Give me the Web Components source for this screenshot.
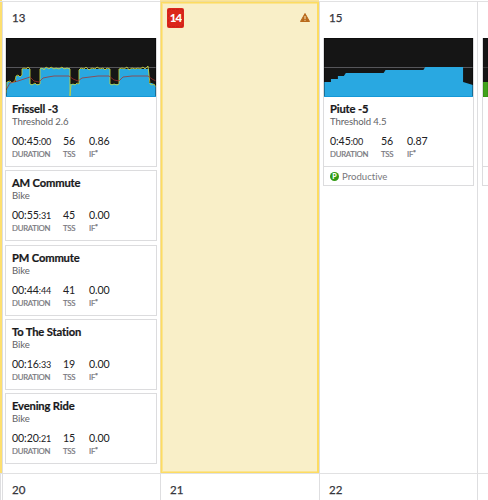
<!DOCTYPE html>
<html lang="en">
<head>
<meta charset="utf-8">
<title>Training Calendar</title>
<style>
    body {
        margin: 0;
        width: 488px;
        height: 500px;
        overflow: hidden;
        background: #fff;
        font-family: Lato, "Liberation Sans", sans-serif;
        font-variant-ligatures: none;
        color: #202023;
    }
</style>
</head>
<body>
<training-calendar>
    <calendar-day class="previous"></calendar-day>
    <calendar-day date="13">
        <workout-card name="Frissell -3" detail="Threshold 2.6" hours="00:45" seconds=":00" tss="56" factor="0.86">
            <power-chart slot="chart" kind="ridden"></power-chart>
        </workout-card>
        <workout-card name="AM Commute" detail="Bike" hours="00:55" seconds=":31" tss="45" factor="0.00"></workout-card>
        <workout-card name="PM Commute" detail="Bike" hours="00:44" seconds=":44" tss="41" factor="0.00"></workout-card>
        <workout-card name="To The Station" detail="Bike" hours="00:16" seconds=":33" tss="19" factor="0.00"></workout-card>
        <workout-card name="Evening Ride" detail="Bike" hours="00:20" seconds=":21" tss="15" factor="0.00"></workout-card>
    </calendar-day>
    <calendar-day date="14" class="today"></calendar-day>
    <calendar-day date="15" class="upcoming">
        <workout-card name="Piute -5" detail="Threshold 4.5" hours="0:45" seconds=":00" tss="56" factor="0.87" level="Productive">
            <power-chart slot="chart" kind="planned"></power-chart>
        </workout-card>
    </calendar-day>
    <calendar-day class="upcoming last">
        <workout-card class="clipped" level=" ">
            <power-chart slot="chart" kind="endurance"></power-chart>
        </workout-card>
    </calendar-day>
    <calendar-day></calendar-day>
    <calendar-day date="20"></calendar-day>
    <calendar-day date="21"></calendar-day>
    <calendar-day date="22"></calendar-day>
    <calendar-day></calendar-day>
</training-calendar>

<script>
class TrainingCalendar extends HTMLElement {
    constructor() {
        super();
        this.attachShadow({ mode: 'open' });
        this.shadowRoot.innerHTML = `
            <style>
                :host {
                    display: grid;
                    grid-template-columns: 2px 158px 159px 158px 11px;
                    grid-template-rows: 472px 27px;
                    padding-top: 1px;
                    background: linear-gradient(90deg, #fce07a 2px, #fff 2px 160px, #fbe49a 160px 319px, #fff 319px) 0 0 / 100% 1px no-repeat;
                }
            </style>
            <slot></slot>
        `;
    }
}

class CalendarDay extends HTMLElement {
    constructor() {
        super();
        this.attachShadow({ mode: 'open' });
    }

    connectedCallback() {
        const date = this.getAttribute('date') || '';
        this.shadowRoot.innerHTML = `
            <style>
                :host {
                    display: block;
                    box-sizing: border-box;
                    min-width: 0;
                    overflow: hidden;
                    border-top: 1px solid #e1e1e2;
                    border-left: 1px solid #dedee0;
                }

                :host(.previous) {
                    background: #fddf70;
                    border-left: 0;
                }

                :host(.today) {
                    border-left-color: #f3dfa0;
                    border-top-color: #f0dc98;
                    background: #f9efc8;
                    box-shadow: inset 0 0 0 1px #fddc62, inset -2px 0 0 0 #fddc62, inset 0 0 0 2px #fbe491;
                }

                header {
                    display: flex;
                    justify-content: space-between;
                    box-sizing: border-box;
                    height: 36px;
                    padding: 9px 9px 0 9px;
                    font-size: 11.5px;
                    line-height: 14px;
                    -webkit-text-stroke: 0.25px #36363c;
                    color: #36363c;
                }

                :host(.today) header {
                    padding: 6px 9px 0 6px;
                }

                :host(.today) .date {
                    box-sizing: border-box;
                    width: 17px;
                    height: 20px;
                    border-radius: 2px;
                    background: #dc261b;
                    outline: 1px dashed #c9231a;
                    outline-offset: -2px;
                    color: #fff;
                    font-weight: 900;
                    -webkit-text-stroke: 0;
                    letter-spacing: -0.8px;
                    line-height: 20px;
                    text-align: center;
                }

                svg {
                    margin-top: 5px;
                }

                .workouts {
                    display: flex;
                    flex-direction: column;
                    gap: 3.3px;
                    padding: 0 3px 0 2px;
                }

                :host(.upcoming) .workouts {
                    padding: 0 3px;
                }

                :host(.last) .workouts {
                    padding: 0 0 0 4px;
                }
            </style>
            <header>
                <span class="date">${date}</span>
                ${this.classList.contains('today') ? `
                <svg width="10" height="9" viewBox="0 0 10 9">
                    <path d="M5 .5 9.5 8.5H.5Z" fill="#b96a1c" stroke="#b96a1c" stroke-linejoin="round"/>
                    <path d="M5 3v3M5 6.8v1" stroke="#f8e9bd"/>
                </svg>` : ''}
            </header>
            <div class="workouts"><slot></slot></div>
        `;
    }
}

class WorkoutCard extends HTMLElement {
    constructor() {
        super();
        this.attachShadow({ mode: 'open' });
    }

    connectedCallback() {
        const value = name => this.getAttribute(name) || '';
        const stats = value('tss') ? `
            <dl>
                <div><dt>${value('hours')}<small>${value('seconds')}</small></dt><dd>DURATION</dd></div>
                <div><dt>${value('tss')}</dt><dd>TSS</dd></div>
                <div><dt>${value('factor')}</dt><dd>IF<sup>*</sup></dd></div>
            </dl>` : '';
        const level = this.hasAttribute('level') ? `
            <footer>${value('level').trim() ? `<i>P</i><span>${value('level')}</span>` : ''}</footer>` : '';

        this.shadowRoot.innerHTML = `
            <style>
                :host {
                    display: block;
                    box-sizing: border-box;
                    border: 1px solid #dcdcde;
                    background: #fff;
                }

                :host(.clipped) {
                    border-right: 0;
                }

                .body {
                    box-sizing: border-box;
                    height: 69px;
                    padding: 5px 0 0 6px;
                    white-space: nowrap;
                }

                h3 {
                    margin: 0;
                    font-size: 11.2px;
                    line-height: 13px;
                    font-weight: 700;
                    letter-spacing: -0.15px;
                    -webkit-text-stroke: 0.2px #18181a;
                    color: #18181a;
                }

                p {
                    margin: 0;
                    font-size: 9.6px;
                    line-height: 13px;
                    letter-spacing: -0.1px;
                    color: #626266;
                }

                dl {
                    display: grid;
                    grid-template-columns: 51px 26px auto;
                    margin: 6px 0 0;
                }

                dt {
                    height: 14px;
                    font-size: 10.6px;
                    line-height: 14px;
                    letter-spacing: -0.1px;
                }

                small {
                    font-size: 9px;
                    line-height: 0;
                }

                dd {
                    height: 10px;
                    margin: 1px 0 0;
                    font-size: 7.8px;
                    line-height: 10px;
                    letter-spacing: -0.25px;
                    -webkit-text-stroke: 0.2px #78787d;
                    color: #78787d;
                }

                sup {
                    font-size: 7px;
                    line-height: 0;
                    vertical-align: 1px;
                }

                footer {
                    display: flex;
                    align-items: center;
                    gap: 3px;
                    box-sizing: border-box;
                    height: 19px;
                    padding-left: 6px;
                    border-top: 1px solid #dcdcde;
                    font-size: 9.6px;
                    color: #78787c;
                }

                i {
                    width: 9px;
                    height: 9px;
                    border-radius: 50%;
                    background: #339b14;
                    color: #fff;
                    font: 900 7px/9px Lato, sans-serif;
                    text-align: center;
                }
            </style>
            <slot name="chart"></slot>
            <div class="body">
                ${value('name') ? `<h3>${value('name')}</h3><p>${value('detail')}</p>` : ''}
                ${stats}
            </div>
            ${level}
        `;
    }
}

// Each chart is 150x59, the threshold line sits at y = 29
const charts = {
    ridden: `
        <path d="M0 59V44H10V38H16V31H24V46H34V30H64V46H73V31H104V46H113V31H143V45H146L150 48V59Z" fill="#29a8e1"/>
        <path d="M0 55 1 44 4 43 6 45 9 43 10 38 12 37 14 39 16 37V31L18 30 20 31 22 29 24 31V46L26 47 29 45 31 47 34 46V31L36 30 38 32 40 29 43 31 45 29 48 31 50 30 53 31 56 29 58 31 61 30 64 31V58L65 47 67 46 69 47 71 45 73 46V32L75 30 78 31 80 29 83 32 86 30 89 31 91 29 94 31 97 30 99 32 101 30 104 31V46L106 47 108 46 111 47 113 46V31L116 30 118 31 121 29 123 32 126 30 129 31 132 30 134 31 137 29 139 31 142 28 144 46 146 47 148 46 150 49" fill="none" stroke="#c5d13c" stroke-width="1" opacity=".85"/>
        <path d="M0 52 4 45 12 43 18 41 24 39 28 43 33 44 37 40 42 39 48 38H63L67 41 72 43 76 40 84 39 92 38H103L108 42 113 43 117 39 126 38H142L146 41 150 43" fill="none" stroke="#a8302b" opacity=".75"/>`,
    planned: `
        <path d="M0 59V44H7V41H14V38H20L22 35H60L62 32H100L102 29H140V44L150 47V59Z" fill="#29a8e1"/>`,
    endurance: `
        <path d="M0 59V44H150V59Z" fill="#41a31b"/>`
};

class PowerChart extends HTMLElement {
    constructor() {
        super();
        this.attachShadow({ mode: 'open' });
    }

    connectedCallback() {
        const kind = this.getAttribute('kind');
        this.shadowRoot.innerHTML = `
            <style>
                :host {
                    display: block;
                    height: 59px;
                    overflow: hidden;
                    margin-top: -1px;
                    background: #151515;
                }

                svg {
                    display: block;
                }
            </style>
            <svg width="100%" height="59" viewBox="0 0 150 59" preserveAspectRatio="none">
                <path d="M0 29.5H150" stroke="#56565a"/>
                ${charts[kind]}
                <path d="M0 .5H150M.5 0V59M149.5 0V59" stroke="#000" fill="none" opacity=".35"/>
                <path d="M0 58.5H150" stroke="${kind === 'endurance' ? '#35910f' : '#1598d7'}"/>
            </svg>
        `;
    }
}

customElements.define('training-calendar', TrainingCalendar);
customElements.define('calendar-day', CalendarDay);
customElements.define('workout-card', WorkoutCard);
customElements.define('power-chart', PowerChart);
</script>
</body>
</html>
